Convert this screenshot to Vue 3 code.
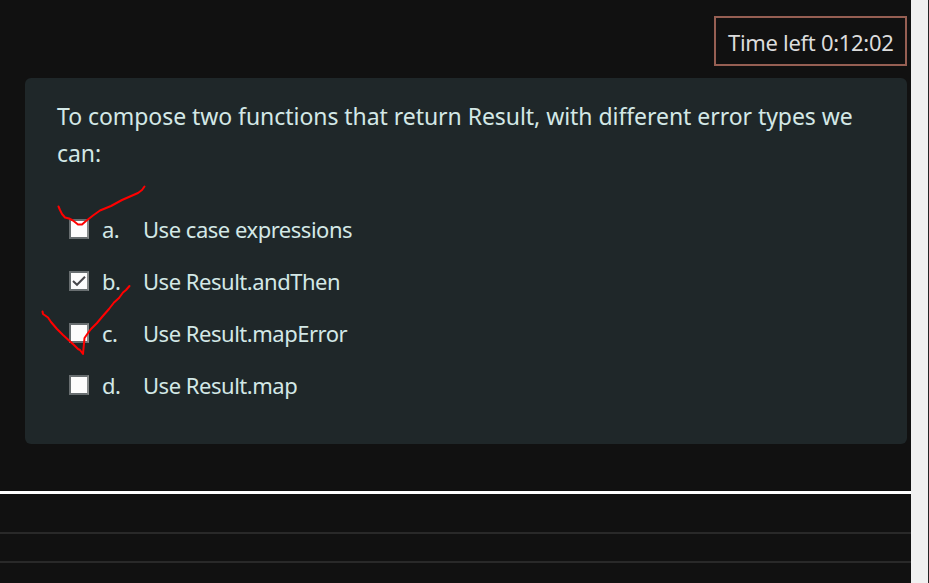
<script setup>
const options = [
  { letter: 'a.', text: 'Use case expressions', checked: false },
  { letter: 'b.', text: 'Use Result.andThen', checked: true },
  { letter: 'c.', text: 'Use Result.mapError', checked: false },
  { letter: 'd.', text: 'Use Result.map', checked: false },
]
</script>

<template>
  <div class="screen">
    <main class="page">
      <header class="top"><div class="timer">Time left 0:12:02</div></header>
      <section class="question">
        <p class="prompt">To compose two functions that return Result, with different error types we<br />can:</p>
        <ul class="options">
          <li v-for="o in options" :key="o.letter" class="option">
            <span class="box">
              <svg v-if="o.checked" viewBox="0 0 16 16" width="16" height="16">
                <path d="M2 8 L6 11.800 L14 3.800" fill="none" stroke="#48484c" stroke-width="2" />
              </svg>
            </span>
            <span class="letter">{{ o.letter }}</span>
            <span class="label">{{ o.text }}</span>
          </li>
        </ul>
      </section>
      <div class="divider"></div>
      <div class="strip first"></div>
      <div class="strip second"></div>
    </main>
    <aside class="scroll"></aside>
    <svg class="ink" viewBox="0 0 929 583" width="929" height="583">
      <path d="M58.500 206.500 L60 210 L62 214 L65 217.500 L69 218.500 L73 220.500 L78 224.500 L82 224.500 L86 221 L93 215.500 L100 210.500 L111 206 L122 200 L130 196.500 L138 193 L142 190 L144.500 186.500" />
      <path d="M42.500 311.500 L43 314 L48 317.500 L51 322 L57 329 L63 335 L69 340.500 L74 345 L78 349 L80 350 L83 354 L84.500 338 L88 333 L91 329 L97 323 L102 317 L109 309 L114 302.500 L119 298 L123 292.500 L126 290 L129.500 286" />
    </svg>
  </div>
</template>

<style>
body { margin: 0; background: #111; }
</style>
<style scoped>
.screen {
  position: relative;
  display: flex;
  width: 929px;
  height: 583px;
  overflow: hidden;
  background: #111;
  color: #d3e8e6;
  font-family: "Noto Sans", "Open Sans", sans-serif;
  font-size: 22px;
}
.page { width: 911px; }
.scroll { box-sizing: border-box; width: 18px; background: #f0f0f0; border-right: 1px solid #242424; }
.top { display: flex; justify-content: flex-end; padding: 16px 4px 12px 0; }
.timer {
  box-sizing: border-box;
  width: 193px;
  height: 50px;
  padding-left: 12px;
  border: 2px solid #965f53;
  line-height: 48px;
  color: #dcdcdc;
  white-space: nowrap;
  letter-spacing: -0.3px;
}
.question {
  box-sizing: border-box;
  width: 882px;
  height: 366px;
  margin-left: 25px;
  padding: 20px 0 0 32px;
  border-radius: 6px;
  background: #1f2729;
}
.prompt { margin: 0; line-height: 37px; white-space: nowrap; font-size: 23px; letter-spacing: -0.05px; }
.options { margin: 31px 0 0; padding: 0 0 0 12px; list-style: none; }
.option { display: flex; align-items: center; height: 52px; white-space: nowrap; letter-spacing: -0.48px; }
.box {
  box-sizing: border-box;
  display: flex;
  width: 20px;
  height: 20px;
  border: 2px solid #686e70;
  border-right-color: #858989;
  background: #fcfcfc;
}
.letter { width: 41px; margin-left: 13px; }
.divider { height: 3px; margin-top: 47px; background: #fff; }
.strip { height: 2px; background: #292929; }
.first { margin-top: 38px; }
.second { margin-top: 27px; }
.ink { position: absolute; inset: 0; }
.ink path { fill: none; stroke: #ff0000; stroke-width: 2; stroke-linejoin: round; stroke-linecap: round; }
</style>
